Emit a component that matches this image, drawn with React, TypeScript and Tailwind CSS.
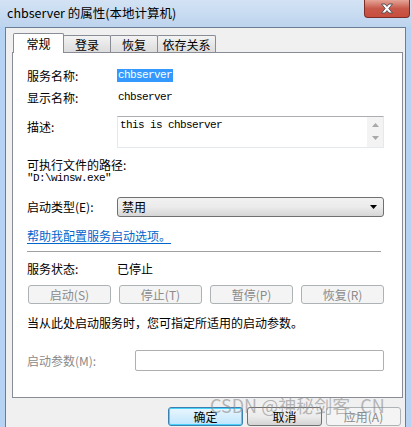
import React from 'react'

const cjk = "font-['Noto_Sans_CJK_SC','Noto_Sans',sans-serif]"
const mono = "font-['Liberation_Mono','Noto_Sans_CJK_SC',monospace]"

const Tab: React.FC<{ label: string; active?: boolean; width: string }> = ({ label, active, width }) =>
  active ? (
    <div
      className={`${width} relative z-10 h-[20px] border border-b-0 border-[#898c95] bg-white flex items-center justify-center text-[12px] leading-none text-black rounded-t-[2px]`}
    >
      {label}
    </div>
  ) : (
    <div
      className={`${width} mb-[1px] h-[17px] border border-b-0 border-[#898c95] bg-gradient-to-b from-[#f3f3f3] to-[#dcdcdc] flex items-center justify-center pt-[2px] text-[12px] leading-none text-black rounded-t-[2px] -ml-[1px]`}
    >
      {label}
    </div>
  )

const DisabledButton: React.FC<{ label: string; width?: string }> = ({ label, width = 'w-[83px]' }) => (
  <div
    className={`${width} h-[19px] rounded-[3px] border border-[#adb2b5] bg-[#f4f4f4] flex items-center justify-center text-[12px] leading-none text-[#8a8a8a]`}
  >
    {label}
  </div>
)

const App: React.FC = () => {
  return (
    <div className={`${cjk} relative w-[411px] h-[427px] overflow-hidden bg-[#b6d3f3] px-[5px]`}>
      {/* title bar */}
      <div className="-mx-[5px] h-[27px] bg-gradient-to-b from-[#d3e3f4] to-[#bdd4ee] flex items-center pl-[7px]">
        <span className="text-[12.5px] text-black leading-none pb-[1px]">chbserver 的属性(本地计算机)</span>
      </div>
      <div className="absolute top-0 left-[364px] w-[46px] h-[18px] rounded-b-[4px] border border-t-0 border-[#7a2e27] bg-gradient-to-b from-[#e4a497] via-[#c7594a] to-[#c94d3c] flex items-center justify-center">
        <svg width="14" height="11" viewBox="0 0 14 11">
          <path
            d="M1.5 1 L5 1 L7 3.4 L9 1 L12.5 1 L8.8 5.5 L12.5 10 L9 10 L7 7.6 L5 10 L1.5 10 L5.2 5.5 Z"
            fill="#ffffff"
            stroke="#4b4b55"
            strokeWidth="0.9"
            strokeLinejoin="round"
          />
        </svg>
      </div>

      {/* client area */}
      <div className="h-[400px] border border-b-0 border-[#6b7d93] bg-[#f0f0f0] pl-[6px] pr-[2px] pt-[5px]">
        <div className="flex items-end -mb-[1px] h-[20px] pl-[1px]">
          <Tab label="常规" active width="w-[51px]" />
          <Tab label="登录" width="w-[48px]" />
          <Tab label="恢复" width="w-[48px]" />
          <Tab label="依存关系" width="w-[59px]" />
        </div>

        <div className="h-[346px] border border-[#898c95] bg-white pl-[14px] text-[12px] leading-none text-black">
          <div className="mt-[16px] h-[13px] flex items-center">
            <span className="w-[90px]">服务名称:</span>
            <span className={`${mono} text-[11px] tracking-[-0.6px] bg-[#3399ff] text-white h-[13px] flex items-center px-[1px]`}>
              chbserver
            </span>
          </div>
          <div className="mt-[9px] h-[13px] flex items-center">
            <span className="w-[90px]">显示名称:</span>
            <span className={`${mono} text-[11px] tracking-[-0.6px] pl-[1px]`}>chbserver</span>
          </div>
          <div className="mt-[12px] h-[32px] flex">
            <span className="w-[90px] pt-[5px]">描述:</span>
            <div className="w-[267px] h-[32px] border border-[#e3e9ef] border-t-[#abadb3] flex">
              <div className={`${mono} flex-1 text-[11px] tracking-[-0.6px] pl-[2px] pt-[3px]`}>this is chbserver</div>
              <div className="w-[16px] bg-[#f3f3f3] flex flex-col items-center pt-[6px] gap-[9px]">
                <svg width="7" height="4" viewBox="0 0 7 4">
                  <path d="M3.5 0 L7 4 L0 4 Z" fill="#a8a8a8" />
                </svg>
                <svg width="7" height="4" viewBox="0 0 7 4">
                  <path d="M0 0 L7 0 L3.5 4 Z" fill="#a8a8a8" />
                </svg>
              </div>
            </div>
          </div>
          <div className="mt-[10px] h-[13px] flex items-center">可执行文件的路径:</div>
          <div className={`${mono} mt-[1px] h-[12px] flex items-center text-[11px] tracking-[-0.6px]`}>"D:\winsw.exe"</div>
          <div className="mt-[13px] h-[20px] flex items-center">
            <span className="w-[90px]">启动类型(E):</span>
            <div className="w-[267px] h-[20px] rounded-[3px] border border-[#707070] bg-gradient-to-b from-[#f2f2f2] via-[#ebebeb] to-[#d6d6d6] flex items-center justify-between pl-[4px] pr-[6px]">
              <span className="text-[12px]">禁用</span>
              <svg width="7" height="4" viewBox="0 0 7 4">
                <path d="M0 0 L7 0 L3.5 4 Z" fill="#000" />
              </svg>
            </div>
          </div>
          <div className="mt-[12px] h-[13px] flex items-center">
            <span className="text-[#0066cc] underline underline-offset-[2px]">帮助我配置服务启动选项。</span>
          </div>
          <div className="mt-[9px] h-[1px] w-[354px] bg-[#a0a0a0]" />
          <div className="mt-[10px] h-[13px] flex items-center">
            <span className="w-[90px]">服务状态:</span>
            <span>已停止</span>
          </div>
          <div className="mt-[10px] flex gap-[8px] ml-[1px]">
            <DisabledButton label="启动(S)" />
            <DisabledButton label="停止(T)" />
            <DisabledButton label="暂停(P)" />
            <DisabledButton label="恢复(R)" />
          </div>
          <div className="mt-[12px] h-[13px] flex items-center">当从此处启动服务时，您可指定所适用的启动参数。</div>
          <div className="mt-[21px] h-[21px] flex items-center">
            <span className="w-[108px] text-[#8a8a8a]">启动参数(M):</span>
            <div className="w-[249px] h-[21px] rounded-[2px] border border-[#afafaf] bg-white" />
          </div>
        </div>

        <div className="mt-[9px] flex justify-end gap-[4px] pr-[2px]">
          <div className="w-[75px] h-[19px] rounded-[3px] border border-[#3c7fb1] bg-gradient-to-b from-[#eaf6fd] to-[#bee6fd] shadow-[inset_0_0_0_1px_#48d2fa] flex items-center justify-center text-[12px] leading-none text-black">
            确定
          </div>
          <div className="w-[75px] h-[19px] rounded-[3px] border border-[#707070] bg-gradient-to-b from-[#f2f2f2] via-[#ebebeb] to-[#d4d4d4] flex items-center justify-center text-[12px] leading-none text-black">
            取消
          </div>
          <DisabledButton label="应用(A)" width="w-[75px]" />
        </div>
      </div>

      {/* watermark */}
      <div className="absolute left-[210px] top-[396px] text-[18px] leading-none text-[#8c8c8c]/60 whitespace-nowrap">
        CSDN @神秘剑客_CN
      </div>
    </div>
  )
}

export default App
